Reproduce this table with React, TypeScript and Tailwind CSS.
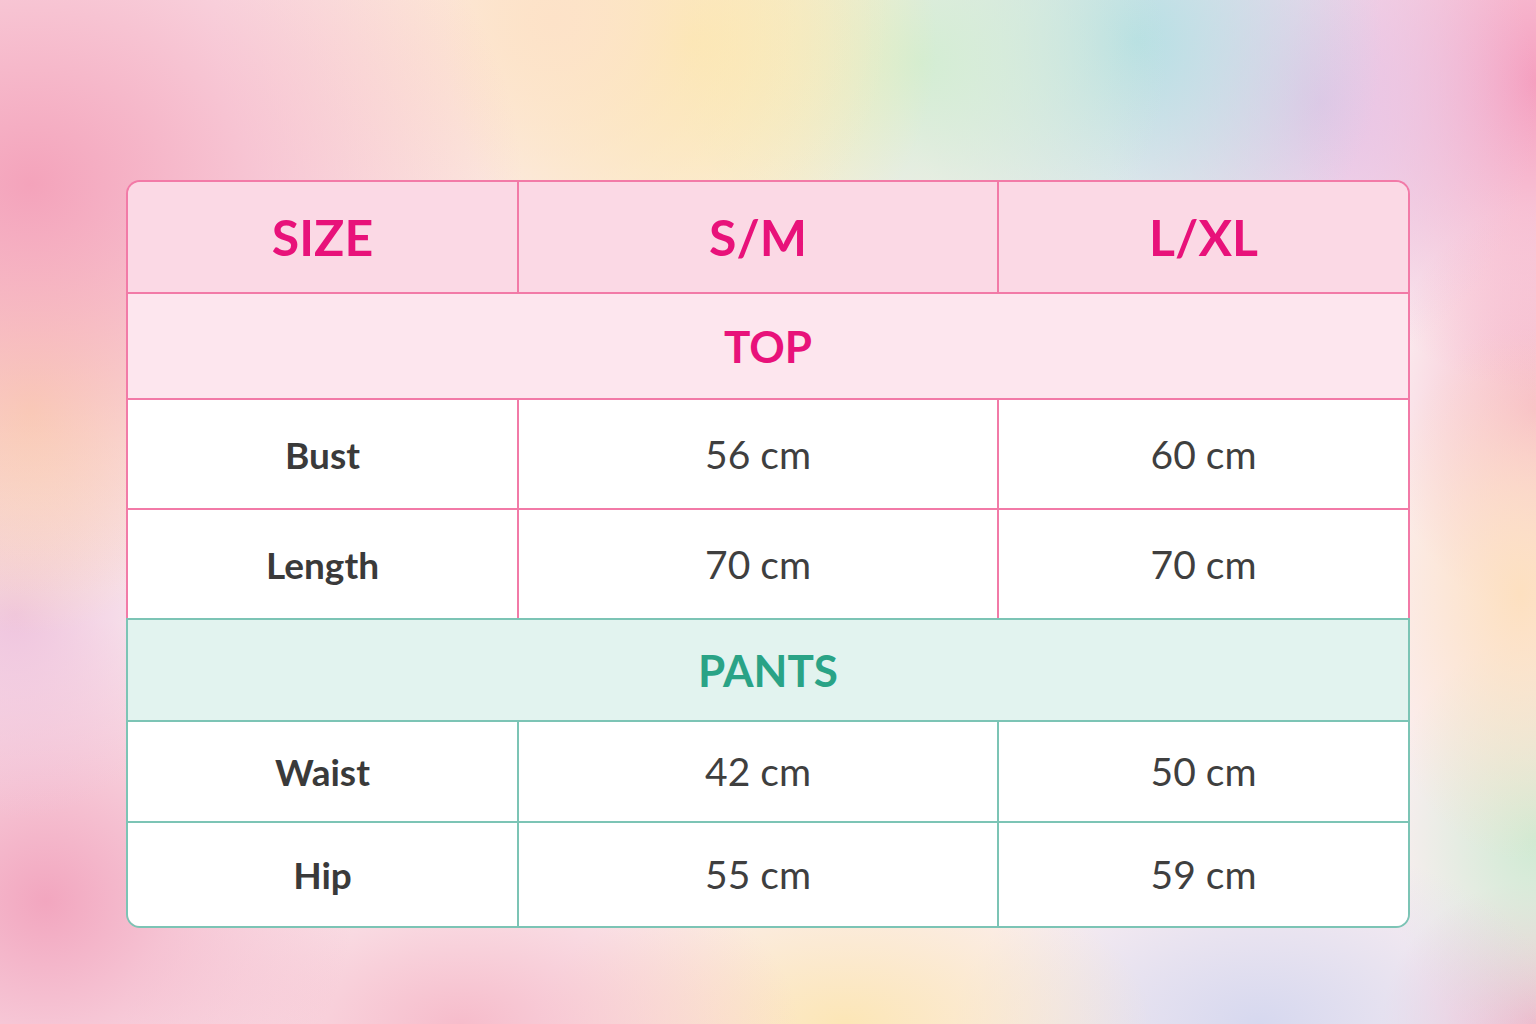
const topRows = [
  { label: "Bust", sm: "56 cm", lxl: "60 cm" },
  { label: "Length", sm: "70 cm", lxl: "70 cm" },
];

const pantsRows = [
  { label: "Waist", sm: "42 cm", lxl: "50 cm", h: "h-[101px]" },
  { label: "Hip", sm: "55 cm", lxl: "59 cm", h: "h-[103px]" },
];

const bg =
  "bg-[radial-gradient(ellipse_32%_40%_at_2%_18%,#f4a3bb_0%,transparent_100%),radial-gradient(ellipse_22%_30%_at_36%_2%,#fde2c8_0%,transparent_100%),radial-gradient(ellipse_16%_26%_at_45%_4%,#fbed9f_0%,transparent_100%),radial-gradient(ellipse_16%_24%_at_60%_6%,#d3edd3_0%,transparent_100%),radial-gradient(ellipse_16%_26%_at_74%_4%,#b6dfe4_0%,transparent_100%),radial-gradient(ellipse_14%_26%_at_86%_10%,#e6c3e6_0%,transparent_100%),radial-gradient(ellipse_16%_30%_at_100%_8%,#f59fbf_0%,transparent_100%),radial-gradient(ellipse_12%_22%_at_2%_40%,#fde6b4_0%,transparent_100%),radial-gradient(ellipse_12%_20%_at_1%_60%,#efc4de_0%,transparent_100%),radial-gradient(ellipse_20%_28%_at_3%_88%,#f2a6bf_0%,transparent_100%),radial-gradient(ellipse_22%_18%_at_30%_100%,#f6bccb_0%,transparent_100%),radial-gradient(ellipse_20%_16%_at_55%_100%,#fce6b6_0%,transparent_100%),radial-gradient(ellipse_20%_18%_at_82%_100%,#d6d8ef_0%,transparent_100%),radial-gradient(ellipse_10%_26%_at_99%_58%,#fde0c0_0%,transparent_100%),radial-gradient(ellipse_10%_20%_at_100%_40%,#f6b6c8_0%,transparent_100%),radial-gradient(ellipse_10%_20%_at_100%_82%,#cfead3_0%,transparent_100%),radial-gradient(ellipse_10%_14%_at_100%_100%,#f3b3c8_0%,transparent_100%)] bg-[#fbeef1]";

export default function App() {
  return (
    <div className={`min-h-[1024px] w-full ${bg} flex justify-center pt-[180px] font-['Lato','Noto_Sans',sans-serif]`}>
      <div className="w-[1284px]">
        {/* TOP section: pink borders */}
        <div className="border-2 border-b-0 border-[#f27aa7] rounded-t-[14px] overflow-hidden">
          <div className="grid grid-cols-[389px_480px_1fr] h-[112px] border-b-2 border-[#f27aa7] bg-[#fbd9e5] text-[#e8127a] text-[50px] font-bold leading-none">
            <div className="flex items-center justify-center">SIZE</div>
            <div className="flex items-center justify-center border-l-2 border-[#f27aa7]">S/M</div>
            <div className="flex items-center justify-center border-l-2 border-[#f27aa7]">L/XL</div>
          </div>
          <div className="h-[106px] border-b-2 border-[#f27aa7] bg-[#fde6ee] flex items-center justify-center text-[#e8127a] text-[44px] font-bold leading-none">
            TOP
          </div>
          {topRows.map((r, i) => (
            <div
              key={r.label}
              className={`grid grid-cols-[389px_480px_1fr] bg-white text-[39px] text-[#3f3f3f] leading-none ${i === 0 ? "h-[110px] border-b-2 border-[#f27aa7]" : "h-[108px]"}`}
            >
              <div className="flex items-center justify-center font-bold text-[37px] text-[#3a3a3a]">{r.label}</div>
              <div className="flex items-center justify-center border-l-2 border-[#f27aa7]">{r.sm}</div>
              <div className="flex items-center justify-center border-l-2 border-[#f27aa7]">{r.lxl}</div>
            </div>
          ))}
        </div>

        {/* PANTS section: teal borders */}
        <div className="border-2 border-[#7cc4b5] rounded-b-[14px] overflow-hidden">
          <div className="h-[102px] border-b-2 border-[#7cc4b5] bg-[#e2f3ef] flex items-center justify-center text-[#2aa386] text-[44px] font-bold leading-none">
            PANTS
          </div>
          {pantsRows.map((r, i) => (
            <div
              key={r.label}
              className={`grid grid-cols-[389px_480px_1fr] bg-white text-[39px] text-[#3f3f3f] leading-none ${r.h} ${i === 0 ? "border-b-2 border-[#7cc4b5]" : ""}`}
            >
              <div className="flex items-center justify-center font-bold text-[37px] text-[#3a3a3a]">{r.label}</div>
              <div className="flex items-center justify-center border-l-2 border-[#7cc4b5]">{r.sm}</div>
              <div className="flex items-center justify-center border-l-2 border-[#7cc4b5]">{r.lxl}</div>
            </div>
          ))}
        </div>
      </div>
    </div>
  );
}
